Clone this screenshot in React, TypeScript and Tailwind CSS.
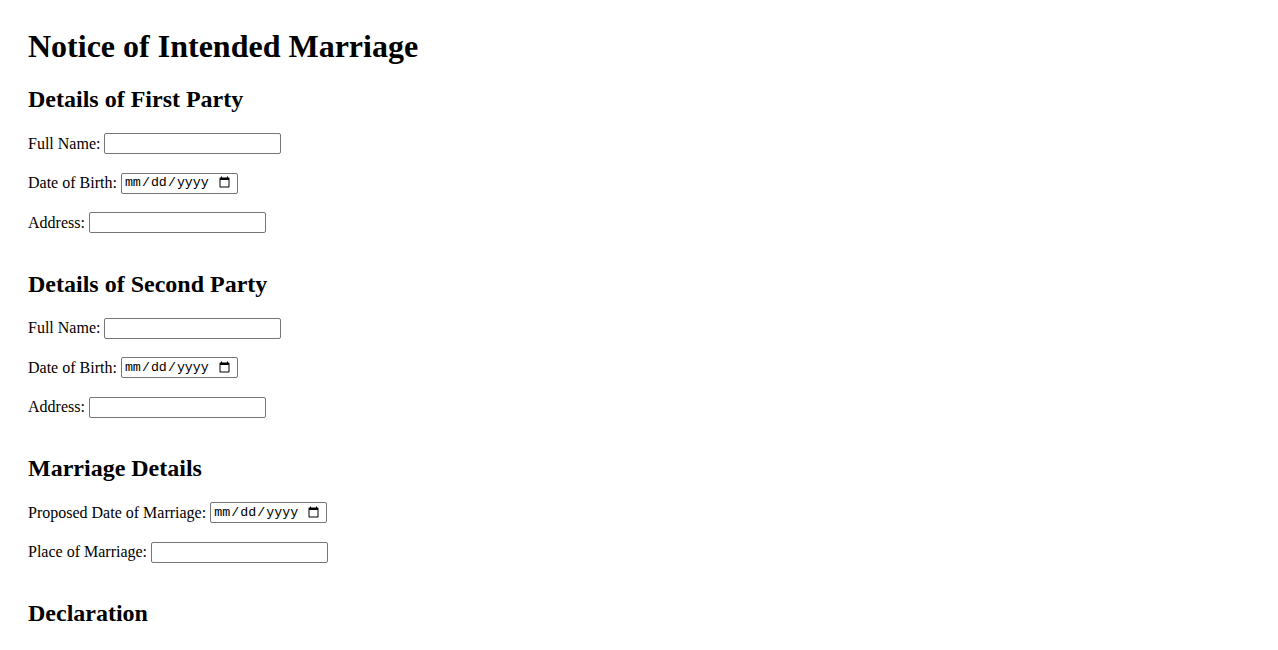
import React from 'react'

type Field = { label: string; type: 'text' | 'date' }

const sections: { title: string; fields: Field[] }[] = [
  {
    title: 'Details of First Party',
    fields: [
      { label: 'Full Name:', type: 'text' },
      { label: 'Date of Birth:', type: 'date' },
      { label: 'Address:', type: 'text' },
    ],
  },
  {
    title: 'Details of Second Party',
    fields: [
      { label: 'Full Name:', type: 'text' },
      { label: 'Date of Birth:', type: 'date' },
      { label: 'Address:', type: 'text' },
    ],
  },
  {
    title: 'Marriage Details',
    fields: [
      { label: 'Proposed Date of Marriage:', type: 'date' },
      { label: 'Place of Marriage:', type: 'text' },
    ],
  },
]

function Row({ field }: { field: Field }) {
  // plain browser-looking inputs
  const box =
    'h-[21px] border border-[#767676] rounded-[2px] bg-white text-black outline-none'
  return (
    <div className="flex items-center gap-[4px] h-[21px]">
      <label className="text-[16px] leading-[18px]">{field.label}</label>
      {field.type === 'date' ? (
        <input
          type="date"
          className={`${box} w-[117px] pl-[2px] pr-[4px] text-[13.33px] font-['Liberation_Mono',monospace]`}
        />
      ) : (
        <input type="text" className={`${box} w-[177px] px-[2px] text-[13px]`} />
      )}
    </div>
  )
}

export default function App() {
  return (
    <div className="min-h-screen bg-white text-black font-['Liberation_Serif','Times_New_Roman',serif] px-7 pt-7">
      <h1 className="text-[32px] leading-[37px] font-bold mb-5">Notice of Intended Marriage</h1>
      {sections.map(s => (
        <section key={s.title} className="mb-[36.5px]">
          <h2 className="text-[24px] leading-[28px] font-bold mb-5">{s.title}</h2>
          <div className="flex flex-col gap-[18.5px]">
            {s.fields.map((f, i) => (
              <Row key={i} field={f} />
            ))}
          </div>
        </section>
      ))}
      <section>
        <h2 className="text-[24px] leading-[28px] font-bold mb-5">Declaration</h2>
      </section>
    </div>
  )
}
